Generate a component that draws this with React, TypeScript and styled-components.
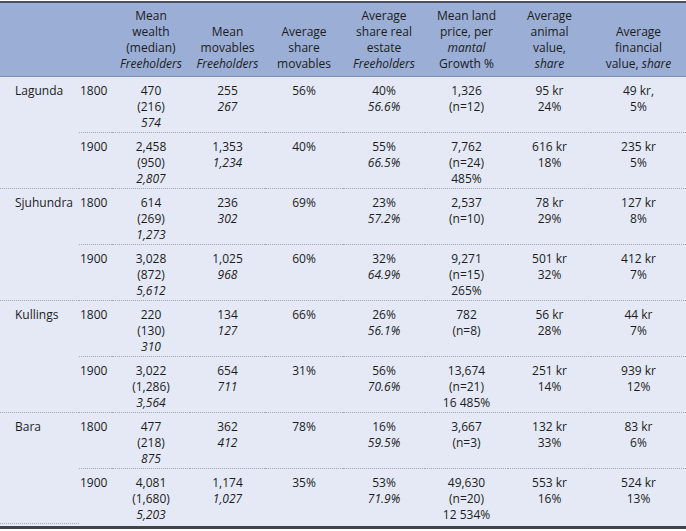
import React from 'react';
import styled, { createGlobalStyle } from 'styled-components';

const GlobalStyle = createGlobalStyle`
  html, body {
    margin: 0;
    padding: 0;
    background: #ffffff;
  }
`;

const Frame = styled.div`
  width: 686px;
  margin-top: 1px;
  border-top: 2px solid #4b505c;
  border-bottom: 3px solid #3f434c;
  padding-bottom: 2px;
  background: #e4e9f5;
  font-family: 'Open Sans', 'Noto Sans', sans-serif;
  font-size: 12px;
  line-height: 16px;
  color: #1c1c1c;
`;

const Table = styled.table`
  width: 686px;
  table-layout: fixed;
  border-collapse: separate;
  border-spacing: 0;
`;

const HeadRow = styled.tr`
  background: #9aaed6;
`;

const HeadCell = styled.th<{ $w: number; $pr?: number }>`
  width: ${(p) => p.$w}px;
  padding: 5px 0 4px 0;
  padding-right: ${(p) => p.$pr ?? 0}px;
  font-weight: 400;
  text-align: center;
  vertical-align: bottom;
  border-bottom: 1px solid #7f8cab;
`;

const Cell = styled.td<{ $last?: boolean; $pr?: number }>`
  padding: 6px 0 1px 0;
  padding-right: ${(p) => p.$pr ?? 0}px;
  text-align: center;
  vertical-align: top;
  border-bottom: ${(p) => (p.$last ? 'none' : '1px dotted #a3a7b3')};
`;

const PlaceCell = styled(Cell)`
  text-align: left;
  padding-left: 15px;
  border-bottom: 1px dotted #a3a7b3;
`;

const YearCell = styled(Cell)`
  text-align: left;
  padding-left: 1px;
`;

const Line = styled.span<{ $i?: boolean }>`
  display: block;
  font-style: ${(p) => (p.$i ? 'italic' : 'normal')};
  white-space: nowrap;
`;

type L = { t: string; i?: boolean };
const n = (t: string): L => ({ t });
const it = (t: string): L => ({ t, i: true });

const widths = [79, 33, 78, 75, 78, 82, 83, 83, 95];

const headers: L[][][] = [
  [],
  [],
  [[n('Mean')], [n('wealth')], [n('(median)')], [it('Freeholders')]],
  [[n('Mean')], [n('movables')], [it('Freeholders')]],
  [[n('Average')], [n('share')], [n('movables')]],
  [[n('Average')], [n('share real')], [n('estate')], [it('Freeholders')]],
  [[n('Mean land')], [n('price, per')], [it('mantal')], [n('Growth %')]],
  [[n('Average')], [n('animal')], [n('value,')], [it('share')]],
  [[n('Average')], [n('financial')], [n('value, '), it('share')]],
];

type Row = { year: string; cells: L[][] };
type Group = { place: string; rows: Row[] };

const groups: Group[] = [
  {
    place: 'Lagunda',
    rows: [
      {
        year: '1800',
        cells: [
          [n('470'), n('(216)'), it('574')],
          [n('255'), it('267')],
          [n('56%')],
          [n('40%'), it('56.6%')],
          [n('1,326'), n('(n=12)')],
          [n('95 kr'), n('24%')],
          [n('49 kr,'), n('5%')],
        ],
      },
      {
        year: '1900',
        cells: [
          [n('2,458'), n('(950)'), it('2,807')],
          [n('1,353'), it('1,234')],
          [n('40%')],
          [n('55%'), it('66.5%')],
          [n('7,762'), n('(n=24)'), n('485%')],
          [n('616 kr'), n('18%')],
          [n('235 kr'), n('5%')],
        ],
      },
    ],
  },
  {
    place: 'Sjuhundra',
    rows: [
      {
        year: '1800',
        cells: [
          [n('614'), n('(269)'), it('1,273')],
          [n('236'), it('302')],
          [n('69%')],
          [n('23%'), it('57.2%')],
          [n('2,537'), n('(n=10)')],
          [n('78 kr'), n('29%')],
          [n('127 kr'), n('8%')],
        ],
      },
      {
        year: '1900',
        cells: [
          [n('3,028'), n('(872)'), it('5,612')],
          [n('1,025'), it('968')],
          [n('60%')],
          [n('32%'), it('64.9%')],
          [n('9,271'), n('(n=15)'), n('265%')],
          [n('501 kr'), n('32%')],
          [n('412 kr'), n('7%')],
        ],
      },
    ],
  },
  {
    place: 'Kullings',
    rows: [
      {
        year: '1800',
        cells: [
          [n('220'), n('(130)'), it('310')],
          [n('134'), it('127')],
          [n('66%')],
          [n('26%'), it('56.1%')],
          [n('782'), n('(n=8)')],
          [n('56 kr'), n('28%')],
          [n('44 kr'), n('7%')],
        ],
      },
      {
        year: '1900',
        cells: [
          [n('3,022'), n('(1,286)'), it('3,564')],
          [n('654'), it('711')],
          [n('31%')],
          [n('56%'), it('70.6%')],
          [n('13,674'), n('(n=21)'), n('16 485%')],
          [n('251 kr'), n('14%')],
          [n('939 kr'), n('12%')],
        ],
      },
    ],
  },
  {
    place: 'Bara',
    rows: [
      {
        year: '1800',
        cells: [
          [n('477'), n('(218)'), it('875')],
          [n('362'), it('412')],
          [n('78%')],
          [n('16%'), it('59.5%')],
          [n('3,667'), n('(n=3)')],
          [n('132 kr'), n('33%')],
          [n('83 kr'), n('6%')],
        ],
      },
      {
        year: '1900',
        cells: [
          [n('4,081'), n('(1,680)'), it('5,203')],
          [n('1,174'), it('1,027')],
          [n('35%')],
          [n('53%'), it('71.9%')],
          [n('49,630'), n('(n=20)'), n('12 534%')],
          [n('553 kr'), n('16%')],
          [n('524 kr'), n('13%')],
        ],
      },
    ],
  },
];

const Lines = ({ lines }: { lines: L[] }) => (
  <>
    {lines.map((l, k) => (
      <Line key={k} $i={l.i}>
        {l.t}
      </Line>
    ))}
  </>
);

export default function App() {
  return (
    <>
      <GlobalStyle />
      <Frame>
        <Table>
          <thead>
            <HeadRow>
              {headers.map((h, k) => (
                <HeadCell key={k} $w={widths[k]} $pr={k === 8 ? 12 : 0}>
                  {h.map((parts, j) => (
                    <Line key={j}>
                      {parts.map((p, q) =>
                        p.i ? <i key={q}>{p.t}</i> : <React.Fragment key={q}>{p.t}</React.Fragment>
                      )}
                    </Line>
                  ))}
                </HeadCell>
              ))}
            </HeadRow>
          </thead>
          <tbody>
            {groups.map((g, gi) =>
              g.rows.map((r, ri) => {
                const last = gi === groups.length - 1 && ri === g.rows.length - 1;
                return (
                  <tr key={`${gi}-${ri}`}>
                    {ri === 0 && <PlaceCell rowSpan={g.rows.length}>{g.place}</PlaceCell>}
                    <YearCell $last={last}>{r.year}</YearCell>
                    {r.cells.map((c, ci) => (
                      <Cell key={ci} $last={last} $pr={ci === 6 ? 12 : 0}>
                        <Lines lines={c} />
                      </Cell>
                    ))}
                  </tr>
                );
              })
            )}
          </tbody>
        </Table>
      </Frame>
    </>
  );
}
